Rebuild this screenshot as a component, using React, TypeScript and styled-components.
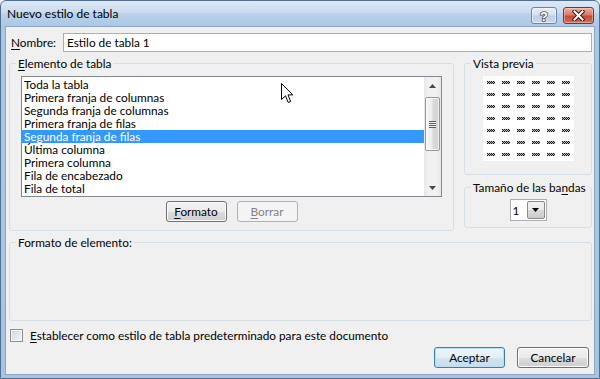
import React from "react";
import styled, { createGlobalStyle } from "styled-components";

const FONT = `Lato, "Noto Sans", "Liberation Sans", sans-serif`;

const GlobalStyle = createGlobalStyle`
  html, body { margin: 0; padding: 0; background: #ffffff; }
  body { font-family: ${FONT}; font-size: 11.8px; color: #000; }
  *, *::before, *::after { box-sizing: border-box; }
  u { text-decoration: underline; text-underline-offset: 2px; }
`;

const Window = styled.div`
  position: relative;
  width: 600px;
  height: 379px;
  display: flex;
  flex-direction: column;
  border: 1px solid #526f92;
  border-radius: 6px 6px 0 0;
  padding: 0 4px 3px 4px;
  background: linear-gradient(180deg, #dce8f5 0px, #cadcf0 11px, #bad1e9 13px, #abc7e6 26px, #a8c4e4 100%);
  overflow: hidden;
`;

const TitleBar = styled.div`
  height: 25px;
  display: flex;
  align-items: flex-start;
  padding-left: 2px;
`;

const TitleText = styled.div`
  flex: 1;
  margin-top: 5px;
  line-height: 16px;
  font-size: 12px;
`;

const Controls = styled.div`
  display: flex;
  gap: 6px;
  margin-top: 6px;
  margin-right: 1px;
`;

const CaptionButton = styled.div<{ $kind: "help" | "close" }>`
  width: ${(p) => (p.$kind === "help" ? 26 : 31)}px;
  height: 17px;
  border-radius: 3px;
  display: flex;
  align-items: center;
  justify-content: center;
  border: 1px solid ${(p) => (p.$kind === "help" ? "#6a86a8" : "#7e3226")};
  background: ${(p) =>
    p.$kind === "help"
      ? "linear-gradient(180deg, #e6eef8 0%, #d3e1f1 45%, #bccfe6 55%, #c9daee 100%)"
      : "linear-gradient(180deg, #eab0a5 0%, #db7a68 45%, #c64a34 55%, #d3705c 100%)"};
  box-shadow: inset 0 0 0 1px ${(p) => (p.$kind === "help" ? "rgba(255,255,255,0.55)" : "rgba(255,220,210,0.45)")};
`;

const Client = styled.div`
  flex: 1;
  display: flex;
  flex-direction: column;
  background: #f0f0f0;
  border: 1px solid #8ea6c3;
  padding: 6px 2px 0 3px;
`;

const NameRow = styled.div`
  display: flex;
  height: 19px;
`;

const NameLabel = styled.label`
  width: 54px;
  padding-left: 2px;
  line-height: 19px;
`;

const NameInput = styled.input`
  flex: 1;
  height: 19px;
  border: 1px solid #abadb3;
  background: #ffffff;
  padding: 0 3px;
  font: inherit;
  font-size: 11.8px;
  color: #000;
  outline: none;
`;

const MainRow = styled.div`
  display: flex;
  gap: 10px;
  margin-top: 4px;
  align-items: flex-start;
`;

const GroupBox = styled.fieldset<{ $grow?: boolean; $width?: number }>`
  margin: 0;
  padding: 0;
  min-width: 0;
  border: 1px solid #d5dfe5;
  border-radius: 3px;
  ${(p) => (p.$grow ? "flex: 1;" : "")}
  ${(p) => (p.$width ? `width: ${p.$width}px;` : "")}
`;

const Legend = styled.legend`
  margin-left: 6px;
  padding: 0 2px;
  line-height: 15px;
  height: 15px;
  white-space: nowrap;
`;

const ElementBody = styled.div`
  display: flex;
  flex-direction: column;
  align-items: center;
  padding: 5px 11px 8px 11px;
`;

const ListBox = styled.div`
  align-self: stretch;
  height: 121px;
  display: flex;
  border: 1px solid #828790;
  background: #ffffff;
`;

const ListItems = styled.div`
  flex: 1;
  display: flex;
  flex-direction: column;
  padding-top: 1px;
`;

const ListItem = styled.div<{ $selected?: boolean }>`
  height: 13px;
  line-height: 13px;
  padding-left: 2px;
  white-space: nowrap;
  background: ${(p) => (p.$selected ? "#3399ff" : "transparent")};
  color: ${(p) => (p.$selected ? "#ffffff" : "#000000")};
`;

const ScrollBar = styled.div`
  width: 17px;
  display: flex;
  flex-direction: column;
  background: linear-gradient(90deg, #e7e7e7 0%, #f1f1f1 25%, #f1f1f1 75%, #e7e7e7 100%);
`;

const ScrollArrow = styled.div`
  height: 17px;
  display: flex;
  align-items: center;
  justify-content: center;
`;

const ScrollTrack = styled.div`
  flex: 1;
  padding: 3px 1px 0 1px;
`;

const Thumb = styled.div`
  height: 54px;
  border: 1px solid #979797;
  border-radius: 2px;
  background: linear-gradient(90deg, #f7f7f7 0%, #ececec 45%, #dadada 55%, #d2d2d2 100%);
  box-shadow: inset 0 0 0 1px rgba(255, 255, 255, 0.7);
  display: flex;
  align-items: center;
  justify-content: center;
`;

const Grip = styled.div`
  width: 7px;
  height: 7px;
  background: repeating-linear-gradient(180deg, #5b5b5b 0px, #5b5b5b 1px, #f4f4f4 1px, #f4f4f4 2px);
`;

const ButtonRow = styled.div`
  display: flex;
  gap: 10px;
  margin-top: 4px;
`;

const Button = styled.button<{ $w: number; $primary?: boolean }>`
  width: ${(p) => p.$w}px;
  height: 21px;
  padding: 0;
  font: inherit;
  font-size: 11.8px;
  color: #000;
  border: 1px solid ${(p) => (p.$primary ? "#3c7fb1" : "#707070")};
  border-radius: 3px;
  background: ${(p) =>
    p.$primary
      ? "linear-gradient(180deg, #eef6fb 0%, #e3eef7 50%, #d3e4f1 51%, #c8dcec 100%)"
      : "linear-gradient(180deg, #f2f2f2 0%, #ebebeb 50%, #dddddd 51%, #cfcfcf 100%)"};
  box-shadow: inset 0 0 0 1px ${(p) => (p.$primary ? "#b6e0f7" : "#fbfbfb")};
  &:disabled {
    border-color: #adb2b5;
    background: #f4f4f4;
    box-shadow: none;
    color: #838383;
  }
`;

const RightColumn = styled.div`
  width: 128px;
  display: flex;
  flex-direction: column;
  gap: 5px;
`;

const PreviewBody = styled.div`
  display: flex;
  justify-content: center;
  padding: 5px 0 13px 0;
`;

const PreviewBox = styled.div`
  background: #ffffff;
  display: grid;
  grid-template-columns: repeat(6, 8px);
  column-gap: 7px;
  row-gap: 9px;
  padding: 5px 4px;
`;

const BandBody = styled.div`
  display: flex;
  justify-content: center;
  padding: 4px 0 6px 0;
`;

const Combo = styled.div`
  width: 37px;
  height: 22px;
  border: 1px solid #abadb3;
  background: #ffffff;
  display: flex;
  align-items: center;
  justify-content: space-between;
  padding: 0 1px 0 2px;
`;

const ComboButton = styled.div`
  width: 18px;
  height: 18px;
  border: 1px solid #8a8a8a;
  border-radius: 2px;
  background: linear-gradient(180deg, #f3f3f3 0%, #e9e9e9 50%, #d9d9d9 51%, #cdcdcd 100%);
  display: flex;
  align-items: center;
  justify-content: center;
`;

const FormatGroup = styled(GroupBox)`
  margin-top: 4px;
`;

const FormatBody = styled.div`
  height: 70px;
`;

const CheckRow = styled.div`
  display: flex;
  align-items: center;
  gap: 7px;
  height: 13px;
  margin-top: 8px;
  padding-left: 1px;
`;

const CheckBox = styled.div`
  width: 13px;
  height: 13px;
  border: 1px solid #8e8f8f;
  background: linear-gradient(135deg, #cfd2d6 0%, #e8e9ea 60%, #f6f6f6 100%);
  box-shadow: inset 0 0 0 1px #f4f4f4;
`;

const CheckLabel = styled.span`
  line-height: 13px;
  white-space: nowrap;
`;

const Footer = styled.div`
  display: flex;
  justify-content: flex-end;
  gap: 12px;
  margin-top: 5px;
  padding-right: 3px;
`;

const CursorLayer = styled.div`
  position: absolute;
  left: 280px;
  top: 82px;
  width: 13px;
  height: 21px;
  pointer-events: none;
`;

const items = [
  "Toda la tabla",
  "Primera franja de columnas",
  "Segunda franja de columnas",
  "Primera franja de filas",
  "Segunda franja de filas",
  "Última columna",
  "Primera columna",
  "Fila de encabezado",
  "Fila de total",
];

const MiniMark = () => (
  <svg width="8" height="3" viewBox="0 0 8 3" shapeRendering="crispEdges">
    {[0, 1, 2].map((y) =>
      [0, 1, 2, 3, 4, 5, 6, 7].map((x) =>
        (x + y) % 2 === 0 ? (
          <rect key={`${x}-${y}`} x={x} y={y} width="1" height="1" fill="#1a1a1a" />
        ) : (
          <rect key={`${x}-${y}`} x={x} y={y} width="1" height="1" fill="#b8b8b8" />
        )
      )
    )}
  </svg>
);

const ArrowUp = () => (
  <svg width="7" height="4" viewBox="0 0 7 4">
    <path d="M3.5 0 L7 4 L0 4 Z" fill="#4a4a4a" />
  </svg>
);

const ArrowDown = ({ color = "#4a4a4a" }: { color?: string }) => (
  <svg width="7" height="4" viewBox="0 0 7 4">
    <path d="M0 0 L7 0 L3.5 4 Z" fill={color} />
  </svg>
);

export default function App() {
  const marks = Array.from({ length: 42 }, (_, i) => <MiniMark key={i} />);
  return (
    <>
      <GlobalStyle />
      <Window>
        <TitleBar>
          <TitleText>Nuevo estilo de tabla</TitleText>
          <Controls>
            <CaptionButton $kind="help">
              <svg width="12" height="14" viewBox="0 0 12 14">
                <text
                  x="6"
                  y="12"
                  textAnchor="middle"
                  fontFamily="'Liberation Sans', sans-serif"
                  fontWeight="bold"
                  fontSize="13"
                  fill="#ffffff"
                  stroke="#44546a"
                  strokeWidth="1.6"
                  paintOrder="stroke"
                >
                  ?
                </text>
              </svg>
            </CaptionButton>
            <CaptionButton $kind="close">
              <svg width="13" height="11" viewBox="0 0 13 11">
                <path d="M2.5 1.5 L10.5 9.5 M10.5 1.5 L2.5 9.5" stroke="#3d1711" strokeWidth="4" strokeLinecap="square" />
                <path d="M2.5 1.5 L10.5 9.5 M10.5 1.5 L2.5 9.5" stroke="#ffffff" strokeWidth="2" strokeLinecap="square" />
              </svg>
            </CaptionButton>
          </Controls>
        </TitleBar>
        <Client>
          <NameRow>
            <NameLabel>
              <u>N</u>ombre:
            </NameLabel>
            <NameInput defaultValue="Estilo de tabla 1" />
          </NameRow>
          <MainRow>
            <GroupBox $grow>
              <Legend>
                <u>E</u>lemento de tabla
              </Legend>
              <ElementBody>
                <ListBox>
                  <ListItems>
                    {items.map((it, i) => (
                      <ListItem key={it} $selected={i === 4}>
                        {it}
                      </ListItem>
                    ))}
                  </ListItems>
                  <ScrollBar>
                    <ScrollArrow>
                      <ArrowUp />
                    </ScrollArrow>
                    <ScrollTrack>
                      <Thumb>
                        <Grip />
                      </Thumb>
                    </ScrollTrack>
                    <ScrollArrow>
                      <ArrowDown />
                    </ScrollArrow>
                  </ScrollBar>
                </ListBox>
                <ButtonRow>
                  <Button $w={61}>
                    <u>F</u>ormato
                  </Button>
                  <Button $w={61} disabled>
                    <u>B</u>orrar
                  </Button>
                </ButtonRow>
              </ElementBody>
            </GroupBox>
            <RightColumn>
              <GroupBox>
                <Legend>Vista previa</Legend>
                <PreviewBody>
                  <PreviewBox>{marks}</PreviewBox>
                </PreviewBody>
              </GroupBox>
              <GroupBox>
                <Legend>
                  Tamaño de las ba<u>n</u>das
                </Legend>
                <BandBody>
                  <Combo>
                    <span>1</span>
                    <ComboButton>
                      <ArrowDown color="#000000" />
                    </ComboButton>
                  </Combo>
                </BandBody>
              </GroupBox>
            </RightColumn>
          </MainRow>
          <FormatGroup>
            <Legend>Formato de elemento:</Legend>
            <FormatBody />
          </FormatGroup>
          <CheckRow>
            <CheckBox />
            <CheckLabel>
              <u>E</u>stablecer como estilo de tabla predeterminado para este documento
            </CheckLabel>
          </CheckRow>
          <Footer>
            <Button $w={71} $primary>
              Aceptar
            </Button>
            <Button $w={72}>Cancelar</Button>
          </Footer>
        </Client>
        <CursorLayer>
          <svg width="13" height="21" viewBox="0 0 13 21">
            <path
              d="M0.5 0.5 L0.5 16.5 L4.5 12.8 L7.2 19.5 L9.6 18.5 L7 11.9 L11.8 11.9 Z"
              fill="#ffffff"
              stroke="#000000"
              strokeWidth="1"
              strokeLinejoin="miter"
            />
          </svg>
        </CursorLayer>
      </Window>
    </>
  );
}
